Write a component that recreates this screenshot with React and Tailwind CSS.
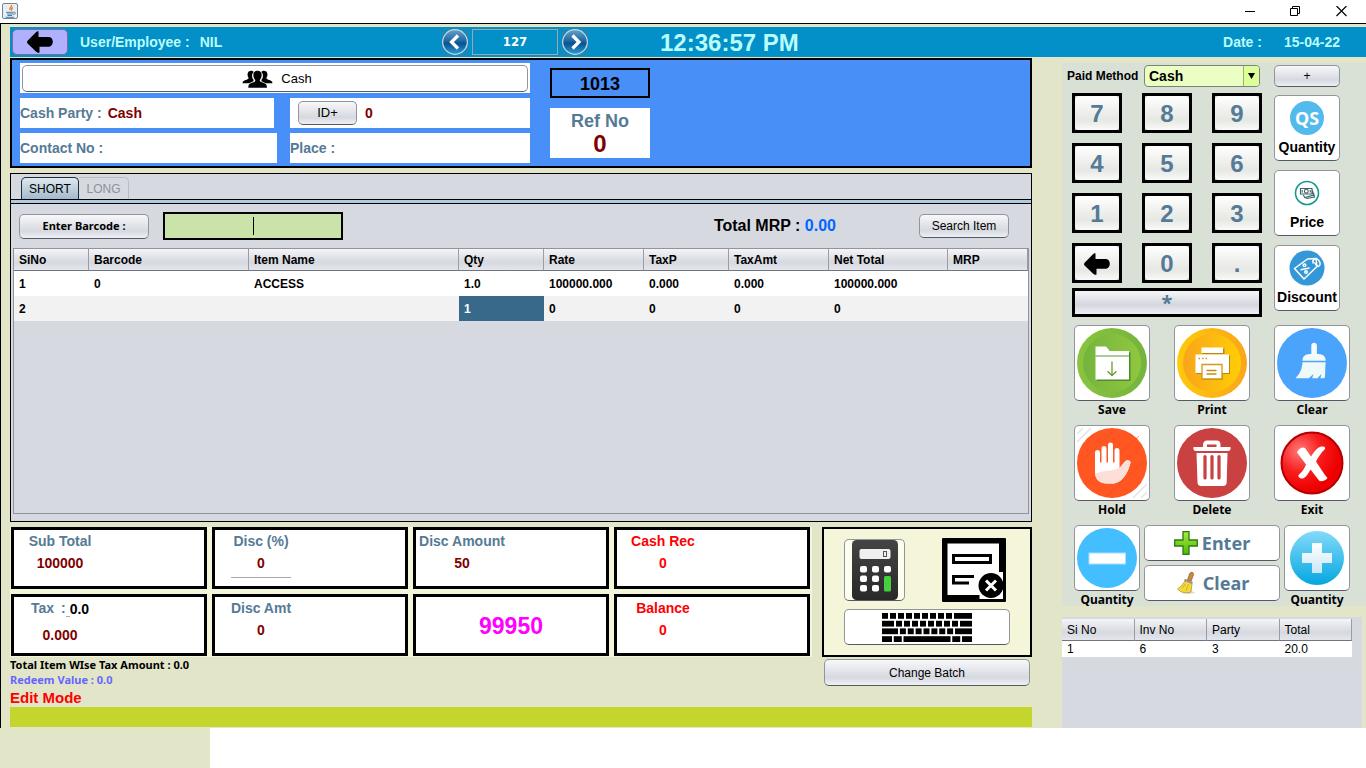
import React from "react";

const ui = "font-['Liberation_Sans',Arial,sans-serif]";
const tahoma = "font-['Noto_Sans',Tahoma,sans-serif]";
const wide = "font-['DejaVu_Sans_Condensed','DejaVu_Sans',Verdana,sans-serif]";
const frame = "rounded-[5px] border border-[#92959c] border-b-[#555963]";
const silver = frame + " bg-linear-to-b from-[#f8f8fa] via-[#d6d9e0] via-70% to-[#eef0f5]";
const plain = frame + " bg-white";

function FatArrow({ className }) {
  return (
    <svg className={className} viewBox="0 0 26 22" aria-hidden="true">
      <path d="M11.5.2V6H21.500c2.500 0 4.300 2 4.300 4.800s-1.800 5-4.300 5H12.500v5.700c-1 .7-2.300.3-3.300-.8L.6 12.600c-.7-.8-.7-2 0-2.900L9 1.200C9.700.4 10.700 0 11.500.2Z" fill="#000" />
    </svg>
  );
}

function JavaIcon() {
  return (
    <svg width="17" height="17" viewBox="0 0 17 17" aria-hidden="true">
      <rect x=".5" y=".5" width="15" height="15" rx="1.500" fill="#e9eef3" stroke="#6f8798" />
      <path d="M9.500 2c1 1.500-2.500 2.500-1.500 5M11 4.500C9 5.500 9.300 6.300 9.700 7.600" fill="none" stroke="#e8761f" strokeWidth="1.300" />
      <path d="M4 9.300h7.500M5 11h6M5.500 12.500h4.500M3.500 14.300h8.500M11.500 9.300c3-.6 2 2.300-.3 2" fill="none" stroke="#4b7fa6" strokeWidth="1" />
    </svg>
  );
}

function Orb({ dir }) {
  const id = "orb-" + dir;
  return (
    <svg width="26" height="28" viewBox="0 0 26 28" aria-hidden="true">
      <defs>
        <linearGradient id={id} x1="0" y1="0" x2="0" y2="1">
          <stop offset="0" stopColor="#6f9fc4" />
          <stop offset=".45" stopColor="#1e69a4" />
          <stop offset=".55" stopColor="#08538f" />
          <stop offset="1" stopColor="#2f9bd4" />
        </linearGradient>
      </defs>
      <rect x=".5" y="1.500" width="25" height="25" rx="4" fill="none" stroke="#54788e" />
      <circle cx="13" cy="14" r="12.300" fill={"url(#" + id + ")"} stroke="#b9dcee" strokeWidth="1.200" />
      <path d={dir === "prev" ? "M16 7.500 9.500 14 16 20.500" : "M10.500 7.500 17 14l-6.500 6.500"} fill="none" stroke="#fff" strokeWidth="3.200" />
    </svg>
  );
}

function PeopleIcon() {
  return (
    <svg width="31" height="18" viewBox="0 0 32 19" aria-hidden="true">
      <path d="M5.500 4.500C5.500 1.500 8 .5 10 .8c1 .2 1.600.7 2 1.300-1.700 1.500-2 3.600-1.600 5.300.3 1.400.9 2.200 1.500 3l-.2 1.500-4.500 2H.2c0-2.500 1.800-2.800 4.300-3.700 1.600-.6 2.300-1 2.100-2C5.800 7.300 5.500 6 5.500 4.500Z" />
      <path d="M26.500 4.500C26.500 1.500 24 .5 22 .8c-1 .2-1.600.7-2 1.300 1.700 1.500 2 3.600 1.600 5.300-.3 1.400-.9 2.200-1.500 3l.2 1.500 4.500 2h7c0-2.500-1.800-2.800-4.300-3.700-1.600-.6-2.300-1-2.100-2 .8-.9 1.100-2.200 1.100-3.700Z" />
      <path d="M16 .8c3.200 0 4.600 2 4.400 4.800-.1 2.200-1 3.700-2 4.900-.2 1.500.8 2 2.900 2.700 2.700.9 4.700 1.400 4.700 5.500H6.300c0-4.100 2-4.600 4.600-5.500 2.100-.7 3-1.200 2.700-2.700-1-1.200-1.900-2.700-2-4.900C11.500 2.800 12.800.8 16 .8Z" />
    </svg>
  );
}

function PriceIcon() {
  return (
    <svg width="26" height="26" viewBox="0 0 26 26" aria-hidden="true">
      <circle cx="13" cy="13" r="11.500" fill="#fff" stroke="#129b93" strokeWidth="1.600" />
      <g fill="none" stroke="#3b6562" strokeWidth="1.100">
        <path d="M6.500 8.500h11.500v5.500H6.500zM18 9.500l1.800 5.500-9 2.500-1.500-2.500M19.500 13l1 4-7.500 1.500-1.500-1" />
        <circle cx="12.300" cy="11.200" r="1.900" />
        <path d="M8.200 10v2.500M16.300 10v2.500" />
      </g>
    </svg>
  );
}

function DiscountIcon() {
  return (
    <svg width="36" height="36" viewBox="0 0 36 36" aria-hidden="true">
      <circle cx="18" cy="18" r="17.500" fill="#3498d8" />
      <g fill="none" stroke="#fff" strokeWidth="1.500" strokeLinejoin="round">
        <path d="m5.500 18.500 13-9.500 8.500-.5 1 8-13 12.500Z" />
        <path d="M24.500 13.500c-2-3 1.500-6.300 4.300-4 2.500 2 3.200 5.500 1.200 6.500-2 .8-3.500-1.500-4.500-3.500" />
        <path d="m11.500 19.700 9-1.800" />
        <circle cx="15.500" cy="15.300" r="1.300" />
        <circle cx="17" cy="22" r="1.300" />
      </g>
    </svg>
  );
}

function SaveIcon() {
  return (
    <svg width="70" height="70" viewBox="0 0 70 70" aria-hidden="true">
      <defs>
        <linearGradient id="save-o"><stop offset="0" stopColor="#8ac43f" /><stop offset="1" stopColor="#74b43c" /></linearGradient>
        <linearGradient id="save-i"><stop offset="0" stopColor="#74b43d" /><stop offset="1" stopColor="#90c740" /></linearGradient>
      </defs>
      <circle cx="35" cy="35" r="35" fill="url(#save-o)" />
      <circle cx="35" cy="35" r="29" fill="url(#save-i)" />
      <path d="M20 53V20.500h11l4 4h18.500V53Z" fill="#4f8a2c" />
      <path d="M18.500 51.500v-33H29l4 4.500h19v28.500Z" fill="#fff" />
      <path d="M18.500 28H52" stroke="#5b9a35" strokeWidth="1.200" />
      <path d="M35 33.500v14M30.500 43.200l4.500 4.300 4.500-4.300" fill="none" stroke="#6b9b34" strokeWidth="1.300" />
    </svg>
  );
}

function PrintIcon() {
  return (
    <svg width="70" height="70" viewBox="0 0 70 70" aria-hidden="true">
      <defs>
        <linearGradient id="print-o"><stop offset="0" stopColor="#fec90b" /><stop offset="1" stopColor="#faa61a" /></linearGradient>
        <linearGradient id="print-i"><stop offset="0" stopColor="#f9a51a" /><stop offset="1" stopColor="#ffcd05" /></linearGradient>
      </defs>
      <circle cx="35" cy="35" r="35" fill="url(#print-o)" />
      <circle cx="35" cy="35" r="29" fill="url(#print-i)" />
      <g fill="#b8860f" transform="translate(1 1)">
        <path d="M24.500 19.500h22v5.500h-22zM18.500 26.500H52V45H18.500z" />
        <path d="M25 36.500h20V51H25z" />
      </g>
      <path d="M24.500 19.500h21.500v5.500H24.500zM18.500 26.500h33.500V45H18.500z" fill="#fff" />
      <path d="M25 36.500h20V51H25z" fill="#fff" stroke="#d59a12" strokeWidth="1.300" />
      <path d="M29.500 42.500h10M29.500 46h10" stroke="#c48f12" strokeWidth="1.400" />
      <path d="M21.500 30.500h1.600M25 30.500h1.600M28.500 30.500h1.600" stroke="#d59a12" strokeWidth="1.400" />
    </svg>
  );
}

function BrushIcon() {
  return (
    <svg width="70" height="70" viewBox="0 0 70 70" aria-hidden="true">
      <circle cx="35" cy="35" r="35" fill="#4aa4fb" />
      <path d="M34.300 17.500c0-3.600 5.600-3.600 5.600 0V26c3.800.2 8.800.5 8.800 6.800H25.500c0-6.300 5-6.600 8.800-6.800Z" fill="#f4fbfb" />
      <path d="M25.500 34.300h23.200c-.6 5-.4 9.500-.7 14.200-.1 1.200-.8 1.800-2 1.800h-2.600l1-4.200-4 4.200h-5.200l1.200-4.400-4.600 4.400H18.500c5-5 6.500-10 7-16Z" fill="#eef9f8" />
    </svg>
  );
}

function HandIcon() {
  return (
    <svg width="70" height="70" viewBox="0 0 70 70" aria-hidden="true">
      <path d="M0 14 14 0M0 6 6 0M56 70 70 56M64 70l6-6" stroke="#e4e4e4" strokeWidth="1.500" />
      <circle cx="35" cy="35" r="35" fill="#ff5622" />
      <path d="M4 34 34 4M8 57 62 8M30 68 68 32" stroke="#e64f22" strokeWidth=".8" opacity=".7" />
      <path d="M18 24.500c0-3.300 5-3.300 5 0v10h1.500v-14c0-3.300 5-3.300 5 0v14H31V17c0-3.300 5-3.300 5 0v17.500h1.500v-12c0-3.300 5-3.300 5 0V40l5.500-6.500c2-2.300 6-1.300 5.500 1.200C51.500 43 46 55.500 35 55.500h-5.500C22 55.500 18 50.500 18 44Z" fill="#fff" />
      <path d="M18 46c8-4 17-2.500 24.500-6l5.500-6.500c2-2.300 6-1.300 5.500 1.200C51.500 43 46 55.500 35 55.500h-5.500C22.500 55.500 18.500 51 18 46Z" fill="#fddfd8" />
    </svg>
  );
}

function TrashIcon() {
  return (
    <svg width="70" height="70" viewBox="0 0 70 70" aria-hidden="true">
      <circle cx="35" cy="35" r="35" fill="#c94141" />
      <path d="M28 20v-3.500c0-1.200.8-2 2-2h9.500c1.200 0 2 .8 2 2V20" fill="none" stroke="#fff" strokeWidth="4" />
      <path d="M16.500 19h37c.5 2.800-.5 4-2.500 4H19c-2 0-3-1.200-2.500-4ZM19.500 25h31l-.8 29.500c-.1 2-1.300 3.500-3.500 3.500H24c-2.200 0-3.400-1.500-3.500-3.500Z" fill="#fff" />
      <path d="M28 28.500V50M35 28.500V50M42 28.500V50" stroke="#c94141" strokeWidth="3.200" strokeLinecap="round" />
    </svg>
  );
}

function ExitIcon() {
  return (
    <svg width="70" height="70" viewBox="0 0 70 70" aria-hidden="true">
      <defs>
        <radialGradient id="exit" cx=".3" cy=".3" r=".65">
          <stop offset="0" stopColor="#ff7979" /><stop offset=".55" stopColor="#f81c1c" /><stop offset="1" stopColor="#ee0000" />
        </radialGradient>
      </defs>
      <circle cx="35" cy="35" r="30.500" fill="url(#exit)" stroke="#b40000" strokeWidth="2" />
      <path d="M20 24.500c2-4.500 6-6 8-4.500l6 8.500c3-5 7-9.500 10.500-10 3.500-.5 4 1 3.500 2.500-3.500 3.500-7 8-9 12.500 4.500 6.500 7.500 12 11.500 16.500-1.500 3-7 4-8.500 2.500l-8.500-11c-2.500 4-4 7.500-7.500 9-3 .5-5-1-4.500-3.500 4-3 6-7 7.500-10.500Z" fill="#fff" />
    </svg>
  );
}

function MinusIcon() {
  return (
    <svg width="60" height="60" viewBox="0 0 60 60" aria-hidden="true">
      <circle cx="30" cy="30" r="30" fill="#43bfff" />
      <rect x="12" y="25" width="36.500" height="11" fill="#fff" stroke="#a5deff" />
    </svg>
  );
}

function PlusIcon() {
  return (
    <svg width="54" height="54" viewBox="0 0 54 54" aria-hidden="true">
      <defs>
        <linearGradient id="plus-c" x1="0" y1="0" x2="0" y2="1"><stop offset="0" stopColor="#83dafa" /><stop offset="1" stopColor="#05a6e0" /></linearGradient>
        <linearGradient id="plus-s" x1="0" y1="0" x2="0" y2="1"><stop offset="0" stopColor="#fff" /><stop offset="1" stopColor="#c9e7f8" /></linearGradient>
      </defs>
      <circle cx="27" cy="27" r="27" fill="url(#plus-c)" />
      <path d="M22 12h10v10h10v10H32v10H22V32H12V22h10Z" fill="url(#plus-s)" />
    </svg>
  );
}

function GreenPlus() {
  return (
    <svg width="24" height="24" viewBox="0 0 24 24" aria-hidden="true">
      <defs><linearGradient id="gplus" x1="0" y1="0" x2="0" y2="1"><stop offset="0" stopColor="#a5ec3a" /><stop offset="1" stopColor="#4eb80d" /></linearGradient></defs>
      <path d="M9 .7h6V9h8.300v6H15v8.300H9V15H.7V9H9Z" fill="url(#gplus)" stroke="#2f7a12" strokeWidth="1.300" />
    </svg>
  );
}

function Broom() {
  return (
    <svg width="24" height="24" viewBox="0 0 24 24" aria-hidden="true">
      <ellipse cx="13" cy="21.500" rx="7" ry="1.500" fill="#ddd" />
      <path d="M12.500 9 14.500 3c.8-2.500 4.500-2 4 .5L16 10.500Z" fill="#c98a3e" stroke="#8f5a22" strokeWidth=".7" />
      <path d="m10 9.500 7 3-1 8.500c-5 1.500-10.500.5-13.500-3C5.500 16 8.500 13 10 9.500Z" fill="#f2d93c" stroke="#b99a1c" strokeWidth=".8" />
      <path d="m9.500 8.800 8 3.200" stroke="#a48a9a" strokeWidth="2" />
      <path d="m7 17.500 4-5M11 20l2.500-7" stroke="#c7a823" strokeWidth=".8" />
    </svg>
  );
}

function CalculatorIcon() {
  const keys = [[8, 26], [20, 26], [32, 26], [8, 35.500], [20, 35.500], [8, 45], [20, 45]];
  return (
    <svg width="46" height="60" viewBox="0 0 46 60" aria-hidden="true">
      <defs><linearGradient id="calc" x1="0" y1="0" x2="0" y2="1"><stop offset="0" stopColor="#444" /><stop offset="1" stopColor="#292929" /></linearGradient></defs>
      <rect width="46" height="60" rx="4.500" fill="url(#calc)" />
      <rect x="7.500" y="9" width="31" height="10" rx="2" fill="#f0f0f0" />
      <rect x="31.500" y="11.500" width="3" height="5" fill="none" stroke="#555" />
      {keys.map(([x, y]) => <rect key={x + "-" + y} x={x} y={y} width="7" height="6.500" rx="2" fill="#fff" />)}
      <rect x="32" y="36" width="7" height="15.500" rx="1.500" fill="#45d13e" />
    </svg>
  );
}

function FormIcon() {
  return (
    <svg width="66" height="66" viewBox="0 0 66 66" aria-hidden="true">
      <rect x="1" y="1" width="64" height="64" rx="1" fill="#000" />
      <path d="M6.500 6.500h51.500v28.500h4V62H38.500v-4H6.500Z" fill="#fff" />
      <path d="M12.500 18.500h37v7h-37zM33 39.500H12.500v6.500H28" fill="none" stroke="#000" strokeWidth="3" />
      <circle cx="50" cy="48.500" r="12.500" fill="#000" />
      <path d="m45 43.500 10 10m0-10-10 10" stroke="#fff" strokeWidth="3" />
    </svg>
  );
}

function KeyboardIcon() {
  const rows = [
    [0, [6, 6, 6, 6, 6, 6, 6, 6, 6, 18]],
    [7.800, [12, 6, 6, 6, 6, 6, 6, 6, 6, 12]],
    [15.400, [16, 6, 6, 6, 6, 6, 6, 6, 17]],
    [23.200, [10, 8, 47, 8, 10]],
  ];
  return (
    <svg width="90" height="29" viewBox="0 0 90 29" aria-hidden="true">
      {rows.map(([y, widths]) => {
        const gap = (90 - widths.reduce((a, b) => a + b, 0)) / (widths.length - 1);
        let x = 0;
        return widths.map((w, i) => {
          const at = x;
          x += w + gap;
          return <rect key={y + "-" + i} x={at} y={y} width={w} height="5.800" />;
        });
      })}
    </svg>
  );
}

const columns = [
  ["SiNo", "w-[75px]"], ["Barcode", "w-[160px]"], ["Item Name", "w-[210px]"], ["Qty", "w-[85px]"], ["Rate", "w-[100px]"],
  ["TaxP", "w-[85px]"], ["TaxAmt", "w-[100px]"], ["Net Total", "w-[119px]"], ["MRP", ""],
];
const items = [
  ["1", "0", "ACCESS", "1.0", "100000.000", "0.000", "0.000", "100000.000", ""],
  ["2", "", "", "1", "0", "0", "0", "0", ""],
];

const headCell = "border-r border-b border-r-[#9a9da6] border-b-[#70747e] text-left";

function Stat({ label, value, red, low }) {
  return (
    <div className="h-[62px] border-[3px] border-black bg-white text-sm font-bold">
      <div className="flex w-[92px] flex-col items-center pt-[3px] leading-[16px] whitespace-nowrap">
        <span className={red ? "text-[#ff0000]" : "text-[#557a96]"}>{label}</span>
        <span className={(low ? "pt-2.5 " : "pt-1.5 ") + (red ? "text-[#ff0000]" : "text-[#800000]")}>{value}</span>
      </div>
    </div>
  );
}

function Key({ children, label }) {
  return (
    <button aria-label={label} className="flex h-10 items-center justify-center border-[3px] border-black bg-[#bfc2bd] text-2xl font-bold text-[#557a96]">
      <span className="flex h-full w-full items-center justify-center rounded-[4px] bg-linear-to-b from-white via-[#e6e8e3] via-70% to-[#fafafa] pt-[2px]">{children}</span>
    </button>
  );
}

function SideButton({ icon, label }) {
  return (
    <button className={plain + " flex h-[66px] w-[66px] flex-col items-center justify-between pt-1 pb-[5px] text-sm leading-[16px] font-bold"}>
      <span className="flex h-9 items-center">{icon}</span>
      {label}
    </button>
  );
}

function Action({ icon, label }) {
  return (
    <div className="flex flex-col items-center">
      <button aria-label={label} className={plain + " flex h-[76px] w-[76px] items-center justify-center"}>{icon}</button>
      <span className={tahoma + " h-6 text-[12px] leading-[18px] font-bold"}>{label}</span>
    </div>
  );
}

export default function App() {
  return (
    <div className={ui + " flex min-h-screen flex-col bg-white text-xs text-black"}>
      <div className="flex h-[23px] items-center justify-between pl-[2px]">
        <JavaIcon />
        <div className="flex items-center pr-[19px]">
          <button aria-label="Minimise" className="mr-[35px]">
            <svg width="10" height="12" viewBox="0 0 10 12"><path d="M0 5.500h10" stroke="#000" /></svg>
          </button>
          <button aria-label="Restore" className="mr-[36px]">
            <svg width="10" height="12" viewBox="0 0 10 12" fill="none" stroke="#000"><path d="M.5 2.500h7v7h-7zM2.500 2.500v-2h7v7h-2" /></svg>
          </button>
          <button aria-label="Close">
            <svg width="11" height="12" viewBox="0 0 11 12" stroke="#000" strokeWidth="1.200"><path d="m.5 0 10 10m0-10-10 10" /></svg>
          </button>
        </div>
      </div>

      <div className="border-t border-l border-black bg-[#e2e5c7] pt-[3px] pl-[9px]">
        <header className="flex h-[30px] items-center bg-[#038fc7] pr-[26px] pl-[2px] font-bold text-[#b9fdfd]">
          <div className="flex w-[430px] items-center text-sm">
            <button aria-label="Back" className="flex h-[26px] w-14 items-center justify-center rounded-[5px] border border-[#70709e] bg-[#b0b0ff]">
              <FatArrow className="h-[22px] w-[26px]" />
            </button>
            <span className="ml-3">User/Employee :</span>
            <span className="ml-2.5">NIL</span>
          </div>
          <button aria-label="Previous"><Orb dir="prev" /></button>
          <div className={wide + " mx-1 flex h-[26px] w-[86px] items-center justify-center border border-[#a5a5a5] text-[13px] text-white"}>127</div>
          <button aria-label="Next"><Orb dir="next" /></button>
          <span className="ml-[72px] pt-[2px] text-[24px]">12:36:57 PM</span>
          <span className="ml-auto text-sm">Date :</span>
          <span className="ml-[22px] text-sm">15-04-22</span>
        </header>

        <div className="flex gap-[30px]">
          <main className="flex-1 pt-[1px] pb-[1px]">
            <section className="flex gap-5 border-2 border-black bg-[#488ff7] py-[3px] pl-2 text-sm font-bold text-[#557a96]">
              <div className="flex w-[510px] flex-col gap-[5px]">
                <div className="flex h-[30px] items-center bg-white px-[2px]">
                  <button className={plain + " flex h-[27px] w-full items-center justify-center gap-2 pt-[2px] pl-1 text-[13px] font-normal text-black"}>
                    <PeopleIcon />Cash
                  </button>
                </div>
                <div className="flex h-[30px] justify-between">
                  <div className="flex w-[254px] items-center gap-1.5 bg-white">Cash Party :<span className="text-[#800000]">Cash</span></div>
                  <div className="flex w-60 items-center gap-2 bg-white pl-2">
                    <button className={silver + " h-6 w-[59px] text-[13px] font-normal text-black"}>ID+</button>
                    <span className="text-[#800000]">0</span>
                  </div>
                </div>
                <div className="flex h-[30px] justify-between">
                  <div className="flex w-[257px] items-center bg-white">Contact No :</div>
                  <div className="flex w-60 items-center bg-white">Place :</div>
                </div>
              </div>
              <div className="flex w-[100px] flex-col gap-2.5 pt-[5px] text-center">
                <div className="h-[30px] border-2 border-black pt-[2px] text-lg leading-[24px] text-black">1013</div>
                <div className="h-[50px] bg-white pt-[1px] text-lg leading-[24px]">Ref No<div className="text-2xl leading-[22px] text-[#800000]">0</div></div>
              </div>
            </section>

            <section className="mt-[5px] border border-black bg-[#d6d9e0] pt-[3px] pb-[7px]">
              <div role="tablist" className="flex h-[22px] pl-2.5">
                <button role="tab" aria-selected="true" className="w-[58px] rounded-t-[5px] border border-b-0 border-[#1b2c3d] bg-linear-to-b from-[#e0e8ef] to-[#a3bacb]">SHORT</button>
                <button role="tab" aria-selected="false" className="w-[50px] rounded-tr-[5px] border border-b-0 border-l-0 border-[#b9bcc4] text-[#8e9197]">LONG</button>
              </div>
              <div className="h-[5px] border-y border-black bg-[#b0cbdf]" />
              <div className="flex h-11 items-center pr-[22px] pl-2">
                <button className={silver + " " + tahoma + " h-[25px] w-[130px] text-[11px] font-bold"}>Enter Barcode :</button>
                <div className="relative ml-3.5">
                  <input aria-label="Barcode" className="block h-7 w-[180px] border-2 border-black bg-[#c9e3a9] text-center caret-transparent outline-none" />
                  <span className="pointer-events-none absolute inset-y-[5px] left-1/2 w-px bg-black" />
                </div>
                <span className="ml-auto text-base font-bold">Total MRP : <span className="text-[#0066ff]">0.00</span></span>
                <button className={silver + " ml-[83px] h-6 w-[90px]"}>Search Item</button>
              </div>
              <div className="mx-[2px] h-[266px] border border-[#8f94a0]">
                <table className="w-full table-fixed border-separate border-spacing-0 font-bold">
                  <thead>
                    <tr className="h-[22px] bg-linear-to-b from-[#f5f5f8] via-[#d6d9e0] via-60% to-[#e6e8ee]">
                      {columns.map(([name, width]) => <th key={name} className={headCell + " pl-[5px] leading-[16px] " + width}>{name}</th>)}
                    </tr>
                  </thead>
                  <tbody>
                    {items.map((row, r) => (
                      <tr key={r} className={r ? "h-[25px] bg-[#f2f2f2]" : "h-[25px] bg-white"}>
                        {row.map((cell, c) => (
                          <td key={c} className={r === 1 && c === 3 ? "bg-[#39698a] pl-[5px] text-white" : "pl-[5px]"}>{cell}</td>
                        ))}
                      </tr>
                    ))}
                  </tbody>
                </table>
              </div>
            </section>

            <section className="mt-[5px] flex gap-2.5">
              <div className="grid h-[130px] flex-1 grid-cols-4 content-start gap-[5px] bg-[#f5f5da] pr-[2px] pl-[1px]">
                <Stat label="Sub Total" value="100000" />
                <Stat label="Disc (%)" value={<span className="flex h-[23px] w-[60px] justify-center border-b border-[#a9a9a9]">0</span>} />
                <Stat label="Disc Amount" value="50" />
                <Stat label="Cash Rec" value="0" red />
                <Stat
                  low
                  label={<span className="flex gap-[7px]">Tax<span className="flex">:<span className="w-1 border-b border-[#a9a9a9]" /><span className="pt-[1px] text-black">0.0</span></span></span>}
                  value="0.000"
                />
                <Stat label="Disc Amt" value="0" />
                <div className="flex h-[62px] items-center justify-center border-[3px] border-black bg-white pt-[2px] text-[23px] font-bold text-[#ff00ff]">99950</div>
                <Stat label="Balance" value="0" red />
              </div>
              <div className="flex h-[130px] w-[210px] flex-col gap-[6px] border-2 border-black bg-[#f5f5da] pt-2 pr-5 pl-5">
                <div className="flex items-center justify-between">
                  <button aria-label="Calculator" className={frame + " flex h-[62px] w-[61px] items-center justify-center bg-[#fdfdee]"}><CalculatorIcon /></button>
                  <button aria-label="Close form" className="mr-[3px]"><FormIcon /></button>
                </div>
                <button aria-label="Keyboard" className={plain + " flex h-9 items-center justify-center"}><KeyboardIcon /></button>
              </div>
            </section>

            <div className="flex h-[50px] justify-between pr-[2px]">
              <div className={tahoma + " text-[11px] leading-[15px] font-bold"}>
                <p>Total Item WIse Tax Amount : 0.0</p>
                <p className="text-[#6666ff]">Redeem Value : 0.0</p>
                <p className={ui + " text-[15px] leading-[22px] text-[#ff0000]"}>Edit Mode</p>
              </div>
              <button className={silver + " mt-[2px] h-[27px] w-[206px]"}>Change Batch</button>
            </div>
            <div className="h-5 bg-[#c4d62d]" />
          </main>

          <aside className="flex w-[304px] flex-col pt-[6px]">
            <div className="bg-[#d9e1d6] pt-[2px] pl-2.5">
              <div className="-ml-[5px] flex h-[22px] items-center">
                <label htmlFor="paid" className="w-[77px] font-bold">Paid Method</label>
                <div className="relative">
                  <select id="paid" defaultValue="Cash" className="block h-[22px] w-[116px] appearance-none rounded-[4px] border border-[#7d8570] bg-[#ebffc4] pl-1 text-sm font-bold outline-none">
                    <option>Cash</option>
                  </select>
                  <span className="pointer-events-none absolute inset-y-[1px] right-[1px] flex w-4 items-center justify-center rounded-r-[3px] border-l border-[#9fb077] bg-[#dcff9a]">
                    <svg width="7" height="6" viewBox="0 0 7 6"><path d="M0 0h7L3.500 6Z" /></svg>
                  </span>
                </div>
                <button aria-label="Add method" className={silver + " ml-3.5 h-[22px] w-[66px] leading-[18px]"}>+</button>
              </div>
              <div className="mt-[6px] flex gap-3">
                <div className="w-[190px]">
                  <div className="grid grid-cols-[50px_50px_50px] gap-x-5 gap-y-2.5">
                    {["7", "8", "9", "4", "5", "6", "1", "2", "3"].map((k) => <Key key={k}>{k}</Key>)}
                    <Key label="Backspace"><FatArrow className="h-[22px] w-[26px]" /></Key>
                    <Key>0</Key>
                    <Key>.</Key>
                  </div>
                  <button className={tahoma + " mt-[5px] h-[29px] w-full border-[3px] border-black bg-linear-to-b from-[#f5f6f8] via-[#d4d7df] via-60% to-[#eef0f4] text-xl leading-[24px] font-bold text-[#557a96]"}>*</button>
                </div>
                <div className="flex flex-col gap-[9px] pt-[2px]">
                  <SideButton label="Quantity" icon={<span className="flex h-[34px] w-[34px] items-center justify-center rounded-full bg-[#52baec] font-['Noto_Sans',sans-serif] text-[18px] text-white">QS</span>} />
                  <SideButton label="Price" icon={<PriceIcon />} />
                  <SideButton label="Discount" icon={<DiscountIcon />} />
                </div>
              </div>
              <div className="mt-2 ml-[2px] grid w-[276px] grid-cols-3 gap-x-6">
                <Action label="Save" icon={<SaveIcon />} />
                <Action label="Print" icon={<PrintIcon />} />
                <Action label="Clear" icon={<BrushIcon />} />
                <Action label="Hold" icon={<HandIcon />} />
                <Action label="Delete" icon={<TrashIcon />} />
                <Action label="Exit" icon={<ExitIcon />} />
              </div>
              <div className={tahoma + " ml-[2px] flex w-[276px] justify-between text-[12px] font-bold"}>
                <div className="flex w-[66px] flex-col items-center">
                  <button aria-label="Decrease quantity" className={plain + " flex h-[66px] w-[66px] items-center justify-center"}><MinusIcon /></button>
                  <span className="h-[15px] leading-[18px]">Quantity</span>
                </div>
                <div className="flex w-[136px] flex-col gap-1 text-lg text-[#557a96]">
                  <button className={plain + " flex h-9 items-center justify-center gap-1"}><GreenPlus />Enter</button>
                  <button className={plain + " flex h-9 items-center justify-center gap-1"}><Broom />Clear</button>
                </div>
                <div className="flex w-[66px] flex-col items-center">
                  <button aria-label="Increase quantity" className={plain + " flex h-[66px] w-[66px] items-center justify-center"}><PlusIcon /></button>
                  <span className="h-[15px] leading-[18px]">Quantity</span>
                </div>
              </div>
            </div>
            <div className="mt-[11px] mr-1 flex-1 bg-[#d6d9e0] pt-[2px] pr-2.5">
              <table className="w-full table-fixed border-separate border-spacing-0">
                <thead>
                  <tr className="h-[22px] bg-linear-to-b from-[#f5f5f8] via-[#d6d9e0] via-60% to-[#e6e8ee]">
                    {["Si No", "Inv No", "Party", "Total"].map((h) => <th key={h} className={headCell + " pl-[5px] font-normal leading-[16px]"}>{h}</th>)}
                  </tr>
                </thead>
                <tbody>
                  <tr className="h-4 bg-white">
                    {["1", "6", "3", "20.0"].map((c) => <td key={c} className="pl-[5px]">{c}</td>)}
                  </tr>
                </tbody>
              </table>
            </div>
          </aside>
        </div>
      </div>
      <footer className="min-h-10 w-[210px] flex-1 bg-[#e2e5c7]" />
    </div>
  );
}
